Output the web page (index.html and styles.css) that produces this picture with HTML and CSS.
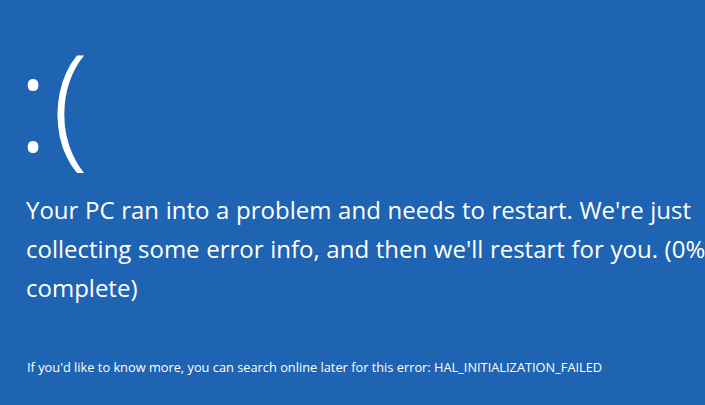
FILE: index.html
```html
<!DOCTYPE html>
<html>
<head>
<meta charset="utf-8">
<link rel="stylesheet" href="styles.css">
</head>
<body>
<main class="screen">
  <div class="face">:(</div>
  <p class="message">Your PC ran into a problem and needs to restart. We're just<br>collecting some error info, and then we'll restart for you. (0%<br>complete)</p>
  <p class="info">If you'd like to know more, you can search online later for this error: HAL_INITIALIZATION_FAILED</p>
</main>
</body>
</html>
```
FILE: styles.css
```css
html, body {
  margin: 0;
  padding: 0;
  background: #1f64b2;
  overflow: hidden;
}
.screen {
  width: 705px;
  height: 405px;
  box-sizing: border-box;
  padding: 16px 0 0 17px;
  color: #ffffff;
  font-family: "Open Sans", "Noto Sans", sans-serif;
  display: flex;
  flex-direction: column;
}
.face {
  font-size: 134px;
  font-weight: 300;
  line-height: 168px;
  height: 168px;
  white-space: nowrap;
  letter-spacing: 3px;
}
.message {
  margin: 6px 0 0 9px;
  font-size: 24px;
  word-spacing: 0.4px;
  line-height: 39px;
  white-space: nowrap;
}
.info {
  margin: 52px 0 0 10px;
  font-size: 12.8px;
  line-height: 16px;
  white-space: nowrap;
}
```
